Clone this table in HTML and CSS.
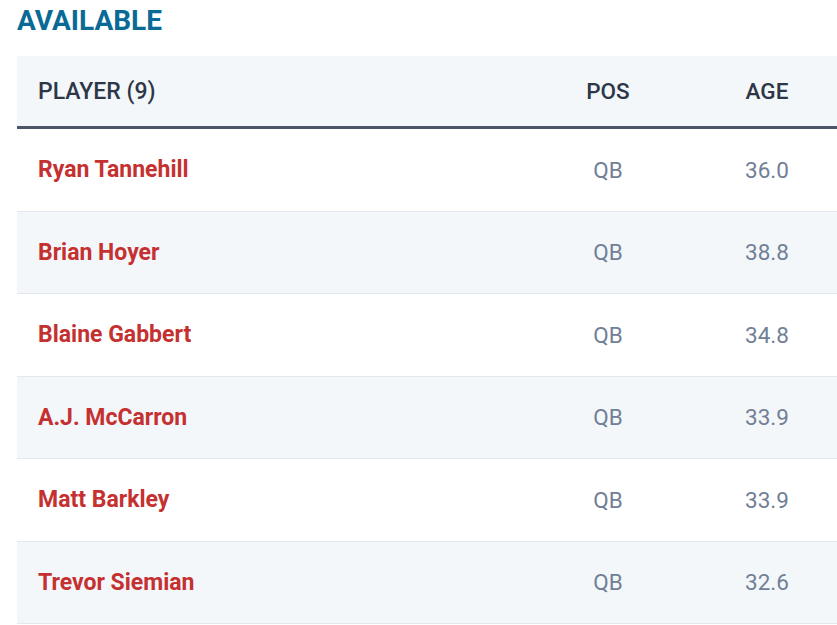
FILE: index.html
```html
<!DOCTYPE html>
<html>
<head>
<meta charset="utf-8">
<link rel="stylesheet" href="styles.css">
</head>
<body>
<div class="wrap">
  <h2 class="title">AVAILABLE</h2>
  <table class="players">
    <thead>
      <tr><th class="c-name">PLAYER (9)</th><th class="c-pos">POS</th><th class="c-age">AGE</th></tr>
    </thead>
    <tbody>
      <tr><td class="c-name">Ryan Tannehill</td><td class="c-pos">QB</td><td class="c-age">36.0</td></tr>
      <tr><td class="c-name">Brian Hoyer</td><td class="c-pos">QB</td><td class="c-age">38.8</td></tr>
      <tr><td class="c-name">Blaine Gabbert</td><td class="c-pos">QB</td><td class="c-age">34.8</td></tr>
      <tr><td class="c-name">A.J. McCarron</td><td class="c-pos">QB</td><td class="c-age">33.9</td></tr>
      <tr><td class="c-name">Matt Barkley</td><td class="c-pos">QB</td><td class="c-age">33.9</td></tr>
      <tr><td class="c-name">Trevor Siemian</td><td class="c-pos">QB</td><td class="c-age">32.6</td></tr>
    </tbody>
  </table>
</div>
</body>
</html>
```
FILE: styles.css
```css
html, body {
  margin: 0;
  padding: 0;
  background: #fff;
  overflow: hidden;
}
.wrap {
  padding: 4px 0 0 17px;
  font-family: Roboto, "Liberation Sans", sans-serif;
}
.title {
  margin: 0 0 19px 0;
  font-size: 28px;
  line-height: 33px;
  font-weight: 700;
  color: #0a6a96;
}
.players {
  border-collapse: collapse;
  width: 841px;
  table-layout: fixed;
}
.players th {
  height: 70px;
  padding: 0;
  background: #f4f7fa;
  border-bottom: 3px solid #4a5568;
  font-size: 22.5px;
  font-weight: 500;
  color: #2d3748;
}
.players th.c-name {
  font-size: 23px;
}
.players td {
  height: 81.5px;
  padding: 0;
  border-bottom: 1px solid #e2e8f0;
  font-size: 22.5px;
}
.players tbody tr:nth-child(even) td {
  background: #f4f7fa;
}
.c-name {
  width: 502px;
  text-align: left;
  padding-left: 21px !important;
}
.c-pos {
  width: 136px;
  text-align: center;
}
.c-age {
  width: 182px;
  text-align: center;
}
.players td.c-name {
  font-size: 23px;
  font-weight: 700;
  color: #c53030;
}
td.c-pos, td.c-age {
  color: #718096;
}
```
